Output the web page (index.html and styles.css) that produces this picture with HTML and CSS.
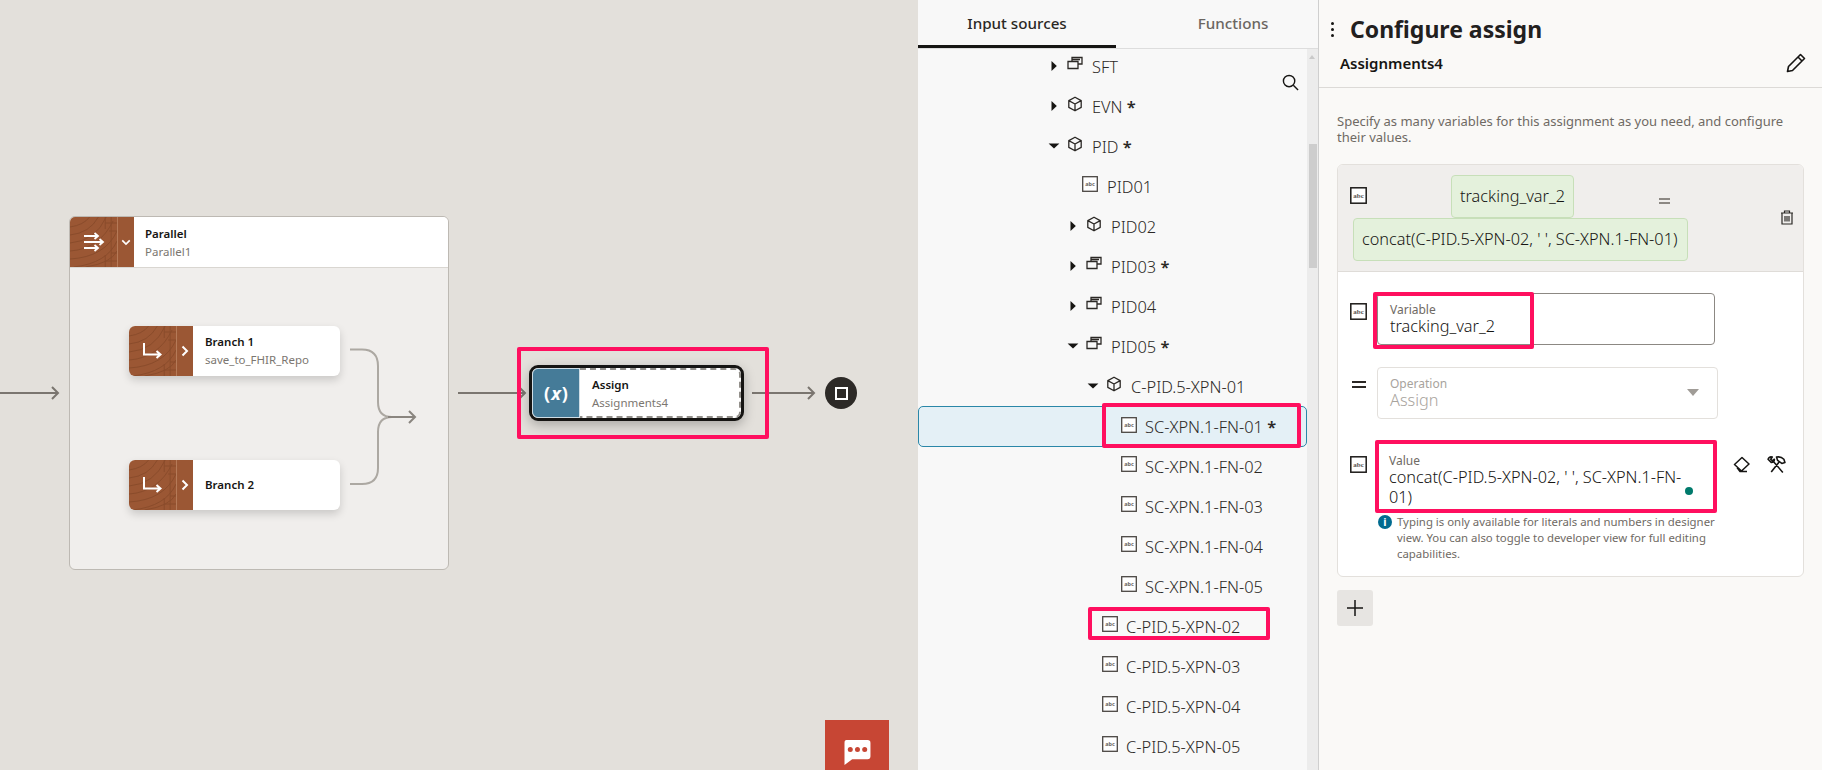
FILE: index.html
```html
<!DOCTYPE html>
<html lang="en">
<head>
<meta charset="utf-8">
<title>Configure assign</title>
<link rel="stylesheet" href="styles.css">
</head>
<body>
<svg class="defs" width="0" height="0" aria-hidden="true">
  <defs>
    <symbol id="wood" viewBox="0 0 48 50" preserveAspectRatio="none">
      <rect width="48" height="50" fill="#9b5734"/>
      <g fill="none" stroke="#8a4c2c" stroke-width="1">
        <path d="M0 10Q14 8 20 0M0 18Q20 16 29 0M0 26Q26 24 37 0M0 34Q30 32 44 4M0 42Q36 40 48 14M4 50Q38 46 48 24M16 50Q42 46 48 34"/>
        <path d="M42 0V50M36 0V12M36 38V50M36 6H48M40 14H48M36 44H48M42 36H48"/>
      </g>
    </symbol>
    <symbol id="cube" viewBox="0 0 16 16">
      <path d="M8 1.200 14.200 4.600V11.400L8 14.800 1.800 11.400V4.600ZM1.800 4.600 8 8 14.200 4.600M8 8V14.800" fill="none" stroke="currentColor" stroke-width="1.300" stroke-linejoin="round"/>
    </symbol>
    <symbol id="stack" viewBox="0 0 16 16">
      <path d="M5 5V1.500H15V8H11M1 5.500H11V12.500H1ZM5 3.500H13" fill="none" stroke="currentColor" stroke-width="1.300"/>
    </symbol>
    <symbol id="abc" viewBox="0 0 16 16">
      <rect x=".7" y=".7" width="14.600" height="14.600" fill="#fff" stroke="#4a4642" stroke-width="1.300"/>
      <text x="8" y="10" font-size="5.500" font-weight="700" text-anchor="middle" fill="#6b6661" font-family="Noto Sans, sans-serif">abc</text>
    </symbol>
    <symbol id="abc-dark" viewBox="0 0 17 17">
      <rect x=".8" y=".8" width="15.400" height="15.400" fill="#fff" stroke="#1c1a18" stroke-width="1.500"/>
      <text x="8.500" y="11" font-size="7" font-weight="700" text-anchor="middle" fill="#5b5652" font-family="Liberation Serif, serif">abc</text>
    </symbol>
    <symbol id="caret-r" viewBox="0 0 12 12"><path d="M3.500 1 8.800 6 3.500 11Z" fill="#161513"/></symbol>
    <symbol id="caret-d" viewBox="0 0 12 12"><path d="M.6 3.400H11.400L6 8.600Z" fill="#161513"/></symbol>
    <symbol id="branch" viewBox="0 0 22 18">
      <path d="M2 1V12.500H18M14.500 9 18.500 12.500 14.500 16" fill="none" stroke="#fff" stroke-width="2"/>
    </symbol>
    <symbol id="chev" viewBox="0 0 8 12"><path d="M1.500 1.500 6 6 1.500 10.500" fill="none" stroke="#fff" stroke-width="2"/></symbol>
  </defs>
</svg>

<main class="app">
  <section class="canvas">
    <div class="parallel">
      <header class="parallel-head">
        <div class="wood-tile">
          <svg class="wood-bg"><use href="#wood"/></svg>
          <svg class="parallel-icon" viewBox="0 0 22 20"><path d="M1 4H15M11.500 1 15 4 11.500 7M1 10H20M16.500 7 20 10 16.500 13M1 16H15M11.500 13 15 16 11.500 19" fill="none" stroke="#fff" stroke-width="1.800"/></svg>
        </div>
        <div class="wood-handle">
          <svg class="chev-down" viewBox="0 0 12 8"><path d="M1.500 1.500 6 6 10.500 1.500" fill="none" stroke="#fff" stroke-width="2"/></svg>
        </div>
        <div class="node-text">
          <strong class="node-title">Parallel</strong>
          <span class="node-sub">Parallel1</span>
        </div>
      </header>
      <div class="branches">
        <div class="branch-node">
          <div class="wood-tile">
            <svg class="wood-bg"><use href="#wood"/></svg>
            <svg class="branch-icon"><use href="#branch"/></svg>
          </div>
          <div class="wood-handle"><svg class="chev-right"><use href="#chev"/></svg></div>
          <div class="node-text">
            <strong class="node-title">Branch 1</strong>
            <span class="node-sub">save_to_FHIR_Repo</span>
          </div>
        </div>
        <div class="branch-node">
          <div class="wood-tile">
            <svg class="wood-bg"><use href="#wood"/></svg>
            <svg class="branch-icon"><use href="#branch"/></svg>
          </div>
          <div class="wood-handle"><svg class="chev-right"><use href="#chev"/></svg></div>
          <div class="node-text">
            <strong class="node-title">Branch 2</strong>
          </div>
        </div>
      </div>
    </div>

    <svg class="wires" viewBox="0 0 917 770">
      <g fill="none" stroke="#7a756f" stroke-width="2">
        <path d="M0 393H58M52 387 58 393 52 399"/>
        <path d="M458 393H525M519 387 525 393 519 399"/>
        <path d="M752 393H814M808 387 814 393 808 399"/>
      </g>
      <g fill="none" stroke="#aca8a2" stroke-width="2">
        <path d="M350 349.500H362Q378 349.500 378 366V402Q378 417 392 417M350 484H362Q378 484 378 468V432Q378 417 392 417"/>
      </g>
      <path d="M388 417H415M409 411 415 417 409 423" fill="none" stroke="#8a857f" stroke-width="2"/>
    </svg>

    <div class="assign-node">
      <div class="assign-icon">(<i>x</i>)</div>
      <div class="assign-body">
        <strong class="node-title">Assign</strong>
        <span class="node-sub">Assignments4</span>
      </div>
    </div>
    <div class="mark mark-assign"></div>

    <div class="stop"><span class="stop-square"></span></div>

    <button class="chat" aria-label="Chat">
      <svg viewBox="0 0 28 26"><path d="M3 0H25Q28 0 28 3V17Q28 20 25 20H9L1 26V3Q1 0 3 0Z" fill="#fff"/><circle cx="7" cy="10" r="2.600" fill="#c74634"/><circle cx="14.500" cy="10" r="2.600" fill="#c74634"/><circle cx="22" cy="10" r="2.600" fill="#c74634"/></svg>
    </button>
  </section>

  <section class="sources">
    <nav class="tabs">
      <div class="tab tab-active">Input sources</div>
      <div class="tab tab-rest">Functions</div>
    </nav>
    <div class="tree-wrap">
      <ul class="tree">
        <li class="row l0"><svg class="caret"><use href="#caret-r"/></svg><svg class="ico"><use href="#stack"/></svg><span>SFT</span></li>
        <li class="row l0"><svg class="caret"><use href="#caret-r"/></svg><svg class="ico"><use href="#cube"/></svg><span>EVN <b>*</b></span></li>
        <li class="row l0"><svg class="caret"><use href="#caret-d"/></svg><svg class="ico"><use href="#cube"/></svg><span>PID <b>*</b></span></li>
        <li class="row leaf1"><svg class="ico"><use href="#abc"/></svg><span>PID01</span></li>
        <li class="row l1"><svg class="caret"><use href="#caret-r"/></svg><svg class="ico"><use href="#cube"/></svg><span>PID02</span></li>
        <li class="row l1"><svg class="caret"><use href="#caret-r"/></svg><svg class="ico"><use href="#stack"/></svg><span>PID03 <b>*</b></span></li>
        <li class="row l1"><svg class="caret"><use href="#caret-r"/></svg><svg class="ico"><use href="#stack"/></svg><span>PID04</span></li>
        <li class="row l1"><svg class="caret"><use href="#caret-d"/></svg><svg class="ico"><use href="#stack"/></svg><span>PID05 <b>*</b></span></li>
        <li class="row l2"><svg class="caret"><use href="#caret-d"/></svg><svg class="ico"><use href="#cube"/></svg><span>C-PID.5-XPN-01</span></li>
        <li class="row leaf3 selected"><svg class="ico"><use href="#abc"/></svg><span>SC-XPN.1-FN-01 <b>*</b></span></li>
        <li class="row leaf3"><svg class="ico"><use href="#abc"/></svg><span>SC-XPN.1-FN-02</span></li>
        <li class="row leaf3"><svg class="ico"><use href="#abc"/></svg><span>SC-XPN.1-FN-03</span></li>
        <li class="row leaf3"><svg class="ico"><use href="#abc"/></svg><span>SC-XPN.1-FN-04</span></li>
        <li class="row leaf3"><svg class="ico"><use href="#abc"/></svg><span>SC-XPN.1-FN-05</span></li>
        <li class="row leaf2"><svg class="ico"><use href="#abc"/></svg><span>C-PID.5-XPN-02</span></li>
        <li class="row leaf2"><svg class="ico"><use href="#abc"/></svg><span>C-PID.5-XPN-03</span></li>
        <li class="row leaf2"><svg class="ico"><use href="#abc"/></svg><span>C-PID.5-XPN-04</span></li>
        <li class="row leaf2"><svg class="ico"><use href="#abc"/></svg><span>C-PID.5-XPN-05</span></li>
      </ul>
      <div class="scrollbar"><span class="scroll-up"></span><span class="scroll-thumb"></span></div>
      <svg class="search" viewBox="0 0 18 18"><circle cx="7.500" cy="7.500" r="6" fill="none" stroke="#161513" stroke-width="1.500"/><path d="M12 12 17 17" stroke="#161513" stroke-width="1.500"/></svg>
      <div class="mark mark-sc"></div>
      <div class="mark mark-cpid"></div>
    </div>
  </section>

  <aside class="config">
    <header class="config-head">
      <div class="title-line">
        <span class="dots"><i></i><i></i><i></i></span>
        <h1>Configure assign</h1>
      </div>
      <div class="name-line">
        <span class="name">Assignments4</span>
        <svg class="pencil" viewBox="0 0 20 20"><path d="M1.500 18.500 2.500 13.500 14.500 1.500 18.500 5.500 6.500 17.500ZM12 4 16 8" fill="none" stroke="#161513" stroke-width="1.600" stroke-linejoin="round"/></svg>
      </div>
    </header>
    <div class="config-body">
      <p class="desc">Specify as many variables for this assignment as you need, and configure their values.</p>
      <div class="card">
        <div class="card-head">
          <svg class="abc-lg head-abc"><use href="#abc-dark"/></svg>
          <div class="chips">
            <div class="chips-top">
              <span class="chip">tracking_var_2</span>
              <span class="eq-mini"></span>
            </div>
            <span class="chip chip-long">concat(C-PID.5-XPN-02, ' ', SC-XPN.1-FN-01)</span>
          </div>
          <svg class="trash" viewBox="0 0 14 15"><path d="M1 3H13M4.500 3V1H9.500V3M2 3V14H12V3M5 6V11.500M7 6V11.500M9 6V11.500" fill="none" stroke="#2b2825" stroke-width="1.200"/></svg>
        </div>
        <div class="card-main">
          <div class="field-row field-var">
            <svg class="abc-lg"><use href="#abc-dark"/></svg>
            <div class="field field-edit">
              <label>Variable</label>
              <div class="val">tracking_var_2</div>
            </div>
            <div class="mark mark-var"></div>
          </div>
          <div class="field-row field-op">
            <span class="equals"></span>
            <div class="field field-off">
              <label>Operation</label>
              <div class="val">Assign</div>
              <span class="select-caret"></span>
            </div>
          </div>
          <div class="field-row field-value">
            <svg class="abc-lg"><use href="#abc-dark"/></svg>
            <div class="field field-expr">
              <label>Value</label>
              <div class="val">concat(C-PID.5-XPN-02, ' ', SC-XPN.1-FN-01)</div>
              <span class="dot"></span>
            </div>
            <div class="mark mark-value"></div>
            <svg class="tool eraser" viewBox="0 0 17 17"><path d="M9 1.500 16 8 8.500 15 1.500 8.500ZM4 11.500 7 15.500H14" fill="none" stroke="#161513" stroke-width="1.500" stroke-linejoin="round"/></svg>
            <svg class="tool tools" viewBox="0 0 18 18"><path d="M5 5 15 16.500M12 6 4 16M9 2Q13 1 16 4L17 7 14 8 10 5ZM1 4Q2 1 5 2L3.500 4 5 5.500 7 4Q7 7 4 7Z" fill="none" stroke="#161513" stroke-width="1.500" stroke-linejoin="round"/></svg>
          </div>
          <div class="help">
            <span class="info">i</span>
            <p>Typing is only available for literals and numbers in designer view. You can also toggle to developer view for full editing capabilities.</p>
          </div>
        </div>
      </div>
      <button class="add" aria-label="Add">
        <svg viewBox="0 0 18 18"><path d="M9 1V17M1 9H17" stroke="#161513" stroke-width="1.500"/></svg>
      </button>
    </div>
  </aside>
</main>
</body>
</html>
```
FILE: styles.css
```css
* { box-sizing: border-box; }
html, body { margin: 0; padding: 0; height: 100%; }
body { font-family: "Noto Sans", "Open Sans", sans-serif; color: #161513; overflow: hidden; }
.defs { position: absolute; }
.app { display: flex; width: 1822px; height: 770px; overflow: hidden; }

/* annotation frames */
.mark { position: absolute; border: 4px solid #ff0f5f; border-radius: 2px; pointer-events: none; z-index: 5; }
.mark-assign { left: 517px; top: 347px; width: 252px; height: 92px; }
.mark-sc { left: 184px; top: 354px; width: 199px; height: 45px; }
.mark-cpid { left: 170px; top: 558px; width: 182px; height: 33px; }
.mark-var { left: 35px; top: -1px; width: 161px; height: 57px; }
.mark-value { left: 37px; top: -4px; width: 342px; height: 73px; }

/* canvas */
.canvas { position: relative; width: 918px; height: 770px; background: #e3e0db; flex: none; }
.wires { position: absolute; inset: 0; width: 917px; height: 770px; }
.parallel { position: absolute; left: 69px; top: 216px; width: 380px; height: 354px; background: #f0eeec; border: 1px solid #bdb9b3; border-radius: 6px; overflow: hidden; }
.parallel-head { display: flex; height: 51px; background: #fff; border-bottom: 1px solid #d9d6d1; }
.wood-tile { position: relative; width: 47px; flex: none; display: flex; align-items: center; justify-content: center; }
.wood-bg { position: absolute; inset: 0; width: 100%; height: 100%; }
.wood-handle { width: 17px; flex: none; background: #9b5734; border-left: 1px solid #b57a58; display: flex; align-items: center; justify-content: center; }
.parallel-icon { position: relative; width: 22px; height: 20px; }
.chev-down { width: 10px; height: 7px; }
.chev-right { width: 8px; height: 12px; }
.branch-icon { position: relative; width: 22px; height: 18px; }
.node-text { display: flex; flex-direction: column; justify-content: center; gap: 2px; padding: 0 0 0 12px; }
.parallel-head .node-text { padding: 1px 0 0 11px; }
.node-title { font-size: 11.500px; font-weight: 600; line-height: 16px; color: #161513; }
.node-sub { font-size: 11.500px; font-weight: 400; line-height: 16px; color: #7b7670; white-space: nowrap; }
.branches { display: flex; flex-direction: column; gap: 84px; padding: 58px 0 0 59px; }
.branch-node { display: flex; width: 211px; height: 50px; background: #fff; border-radius: 6px; overflow: hidden; box-shadow: 0 4px 8px rgba(0,0,0,.16); }
.assign-node { position: absolute; left: 529px; top: 365px; width: 215px; height: 56px; display: flex; border: 3px solid #161513; border-radius: 9px; background: #fff; overflow: hidden; box-shadow: 0 4px 12px rgba(0,0,0,.25); }
.assign-icon { width: 48px; flex: none; background: #457b98; color: #fff; display: flex; align-items: center; justify-content: center; font-size: 18px; font-weight: 700; border: 1px solid #cfdde5; border-radius: 6px 0 0 6px; }
.assign-icon i { padding: 0 1px; }
.assign-body { flex: 1; display: flex; flex-direction: column; justify-content: center; gap: 2px; padding: 2px 0 0 12px; border: 2px dashed #93908b; border-left: 0; border-radius: 0 6px 6px 0; }
.stop { position: absolute; left: 825px; top: 377px; width: 32px; height: 32px; border-radius: 50%; background: #2d2a27; display: flex; align-items: center; justify-content: center; }
.stop-square { width: 13px; height: 13px; border: 2px solid #fff; }
.chat { position: absolute; left: 825px; top: 720px; width: 64px; height: 50px; padding: 0; border: 0; background: #c74634; display: flex; justify-content: center; padding-top: 20px; }
.chat svg { width: 28px; height: 25px; }

/* sources */
.sources { width: 401px; flex: none; height: 770px; background: #f8f8f8; border-right: 1px solid #cfcfcf; display: flex; flex-direction: column; }
.tabs { display: flex; height: 49px; border-bottom: 1px solid #dddddd; flex: none; }
.tab { font-size: 15.200px; font-weight: 500; line-height: 46px; text-align: center; }
.tab-active { width: 198px; height: 48px; border-bottom: 3px solid #161513; color: #2b2825; }
.tab-rest { flex: 1; padding-left: 32px; color: #6b6661; }
.tree-wrap { position: relative; flex: 1; overflow: hidden; }
.tree { list-style: none; margin: -3px 0 0; padding: 0; width: 389px; }
.row { display: flex; align-items: center; height: 40px; font-size: 16.400px; font-weight: 300; color: #2b2825; white-space: nowrap; }
.row b { font-weight: 600; }
.caret { width: 12px; height: 12px; flex: none; margin-right: 7px; }
.ico { width: 16px; height: 16px; flex: none; margin: 0 9px 4px 0; color: #2b2825; }
.l0 { padding-left: 130px; }
.l1 { padding-left: 149px; }
.l2 { padding-left: 169px; }
.leaf1 { padding-left: 164px; }
.leaf2 { padding-left: 184px; }
.leaf3 { padding-left: 203px; }
.leaf2 .ico, .leaf3 .ico { margin-right: 8px; }
.selected { background: #e4f0f6; border: 1px solid #2a87a8; border-radius: 5px; padding-left: 202px; height: 41px; margin-bottom: -1px; }
.scrollbar { position: absolute; right: 0; top: 0; width: 11px; height: 100%; background: #ececec; }
.scroll-up { position: absolute; left: 2px; top: 6px; border: 3px solid transparent; border-bottom: 4px solid #c9c9c9; border-top: 0; }
.scroll-thumb { position: absolute; left: 2px; top: 95px; width: 8px; height: 124px; background: #cdcdcd; }
.search { position: absolute; left: 364px; top: 25px; width: 17px; height: 17px; }

/* config */
.config { flex: 1; background: #faf9f7; display: flex; flex-direction: column; }
.config-head { height: 88px; border-bottom: 1px solid #dcdad7; flex: none; padding: 13px 16px 0 12px; }
.title-line { display: flex; align-items: center; height: 32px; }
.dots { width: 3px; display: flex; flex-direction: column; gap: 3px; margin-right: 16px; }
.dots i { width: 3px; height: 3px; background: #161513; border-radius: 50%; }
h1 { margin: 0; font-size: 23px; font-weight: 700; line-height: 32px; color: #22201e; }
.name-line { display: flex; justify-content: space-between; align-items: center; padding: 8px 0 0 9px; }
.name { font-size: 15px; font-weight: 600; color: #161513; }
.pencil { width: 20px; height: 20px; }
.config-body { padding: 25px 18px 0; }
.desc { margin: 0 0 19px; font-size: 13px; line-height: 16px; color: #6f6a64; }
.card { border: 1px solid #e3e0dc; border-radius: 6px; overflow: hidden; background: #fff; }
.card-head { position: relative; display: flex; height: 107px; background: #f0eeec; border-bottom: 1px solid #dfdcd8; }
.abc-lg { width: 17px; height: 17px; flex: none; }
.head-abc { margin: 22px 0 0 12px; }
.chips { position: absolute; left: 15px; top: 10px; }
.chips-top { display: flex; padding-left: 98px; height: 43px; }
.chip { display: inline-block; height: 43px; padding: 0 8px; font-size: 16.300px; font-weight: 300; line-height: 41px; background: #e4f1dc; border: 1px solid #c7dfb9; border-radius: 4px; white-space: nowrap; }
.chip-long { width: 335px; }
.eq-mini { width: 11px; height: 6px; margin: 23px 0 0 85px; border-top: 2px solid #8c8883; border-bottom: 2px solid #8c8883; }
.trash { position: absolute; left: 442px; top: 45px; width: 14px; height: 15px; }
.card-main { display: flex; flex-direction: column; padding-top: 21px; height: 304px; }
.field-row { position: relative; display: flex; padding-left: 12px; }
.field-row .abc-lg { margin-top: 10px; }
.field { position: relative; margin-left: 10px; border-radius: 4px; padding: 9px 12px 0; }
.field label { display: block; font-size: 12px; line-height: 13px; color: #6f6a64; }
.val { font-size: 16.300px; line-height: 20px; font-weight: 300; }
.field-var { height: 74px; }
.field-edit { width: 338px; height: 52px; border: 1px solid #8c8883; }
.field-op { height: 77px; }
.equals { width: 14px; height: 7px; margin: 14px 0 0 2px; flex: none; border-top: 2px solid #2b2825; border-bottom: 2px solid #2b2825; }
.field-off { width: 341px; height: 52px; margin-left: 11px; border: 1px solid #e3e0dc; color: #a8a39d; }
.field-off label { color: #a8a39d; }
.field-off .val { color: #a8a39d; }
.select-caret { position: absolute; right: 18px; top: 21px; border: 6px solid transparent; border-top: 7px solid #a09c97; border-bottom: 0; }
.field-value { height: 72px; }
.field-value .abc-lg { margin-top: 12px; }
.field-expr { width: 338px; height: 66px; padding-top: 10px; }
.field-expr .val { width: 300px; }
.dot { position: absolute; right: 22px; top: 43px; width: 8px; height: 8px; border-radius: 50%; background: #007a6c; }
.tool { width: 17px; height: 17px; flex: none; margin: 12px 0 0 18px; }
.tools { width: 19px; height: 19px; margin-left: 17px; margin-top: 11px; }
.help { display: flex; padding-left: 40px; gap: 5px; margin-top: -2px; }
.info { width: 14px; height: 14px; flex: none; border-radius: 50%; background: #006b8f; color: #fff; font-size: 11px; font-weight: 700; line-height: 14px; text-align: center; margin-top: 1px; }
.help p { margin: 0; width: 322px; font-size: 11.400px; line-height: 16px; color: #6f6a64; }
.add { display: block; width: 36px; height: 36px; margin-top: 13px; padding: 9px; border: 0; border-radius: 3px; background: #e7e5e2; }
.add svg { display: block; width: 18px; height: 18px; }
```
